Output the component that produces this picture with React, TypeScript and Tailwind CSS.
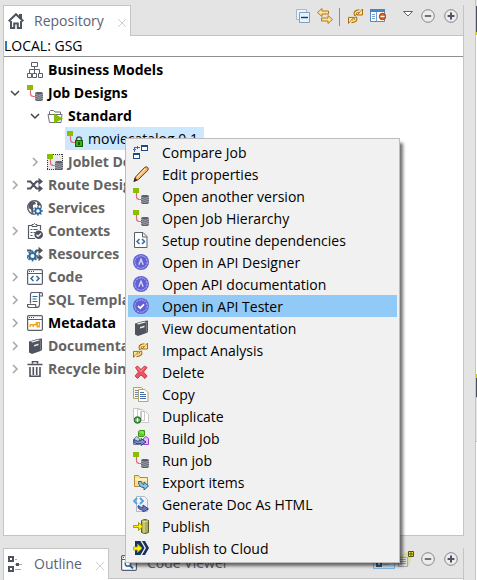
import type { ComponentType, ReactNode } from "react";
import clsx from "clsx";

type Icon = ComponentType;
type TreeItem = {
  name: string;
  icon: Icon;
  level?: number;
  arrow?: "open" | "closed";
  tone?: "dark" | "muted" | "selected";
};
type MenuItem = { name: string; icon: Icon; active?: boolean };

function Svg({ children, crisp }: { children: ReactNode; crisp?: boolean }) {
  return (
    <svg
      viewBox="0 0 16 16"
      className="h-4 w-4 shrink-0"
      fill="none"
      shapeRendering={crisp ? "crispEdges" : undefined}
      aria-hidden="true"
    >
      {children}
    </svg>
  );
}

const House = () => (
  <Svg>
    <path d="M11 1h3v5h-3z" fill="#4f535f" />
    <path d="M0.7 8.3 8 1.2l7.3 7.1" stroke="#4f535f" strokeWidth="2" />
    <path d="M3 8v7h3.2v-4.5h3.6V15H13V8" stroke="#4f535f" strokeWidth="2" />
  </Svg>
);

const OrgChart = () => (
  <Svg>
    <path
      d="M4.500.5h6v4h-6zM7.500 4.500v7M2.500 11.500V7.500h10v4M.5 11.500h4v4h-4zM5.500 11.500h4v4h-4zM11.500 11.500h4v4h-4z"
      stroke="#5b5f6b"
    />
  </Svg>
);

function JobParts() {
  return (
    <>
      <path d="M0 0h6v5H0z" fill="#8abf00" />
      <path d="M3.500 5v3.500q0 3 3 3H9" stroke="#dc6b78" strokeWidth="1.200" />
      <rect x="8" y="7" width="8" height="9" rx="2" fill="#5c606a" />
      <path d="M8 9.500q4 1.500 8 0M8 11.500q4 1.500 8 0M8 13.500q4 1.500 8 0" stroke="#b9bbc0" strokeWidth=".8" />
    </>
  );
}

const Job = () => (
  <Svg>
    <JobParts />
  </Svg>
);

const Joblet = () => (
  <Svg>
    <path d="M0 0h16v16H0z" fill="#e9e9e9" />
    <path d="M0 .5h16M0 15.500h16M.5 0v16M15.500 0v16" stroke="#333" strokeDasharray="1 1" />
    <JobParts />
  </Svg>
);

const LockedJob = () => (
  <Svg>
    <path d="M0 0h6v5H0z" fill="#8abf00" />
    <path d="M3.500 5v3.500q0 3 3 3H9" stroke="#dc6b78" strokeWidth="1.200" />
    <path d="M9.500 10V8.500a2.500 2.500 0 0 1 5 0V10" stroke="#555" strokeWidth="1.500" />
    <rect x="8.500" y="9.500" width="7" height="6" fill="#34b414" stroke="#17600a" />
    <path d="M12 11v3" stroke="#0b4205" strokeWidth="1.500" />
  </Svg>
);

const FolderRun = () => (
  <Svg>
    <path d="M2.500 14.500 1 6.500H15l-1 8zM2.500 6V3.500l1-1h3l1.500 1.500h5.500V6" stroke="#6b6f79" />
    <path d="M7 5.500 16 10.500 7 15.500z" fill="#84bd00" />
  </Svg>
);

function ShuffleParts() {
  return (
    <>
      <path d="M0 4.500h3.500l6 7H13M0 11.500h3.500l6-7H13" stroke="#4f535f" strokeWidth="2" />
      <path d="M11.500.8 16 4.500l-4.500 3.700zM11.500 7.800 16 11.500l-4.500 3.700z" fill="#4f535f" />
    </>
  );
}

function GearParts() {
  return (
    <>
      <circle r="3" stroke="#2d6a9f" strokeWidth="2" />
      <path
        d="M0-5.500V-3M0 3V5.500M-5.500 0H-3M3 0H5.500M-3.900-3.900-2.200-2.200M2.200 2.200 3.900 3.900M3.900-3.900 2.200-2.200M-2.200 2.200-3.900 3.900"
        stroke="#2d6a9f"
        strokeWidth="1.600"
      />
    </>
  );
}

const Shuffle = () => (
  <Svg>
    <ShuffleParts />
  </Svg>
);

const Services = () => (
  <Svg>
    <circle cx="7.500" cy="7.500" r="6.800" fill="#fff" stroke="#555966" strokeWidth="1.400" />
    <path d="M2 3.500 4.500 1.500 8 2l1 2-3 1v2.500l2 2L7 14 4.500 12.500 4 9.500 1.500 8zM10.500 1.500l3 3-2 2-1.500-2z" fill="#555966" />
    <circle cx="11" cy="11" r="5" fill="#fff" />
    <g transform="translate(11 11) scale(.88)">
      <GearParts />
    </g>
  </Svg>
);

const Contexts = () => (
  <Svg>
    <path d="M8 15.500H1.500v-13H5M10 2.500h3.500V7" stroke="#555966" strokeWidth="1.200" />
    <path d="M5 3.500v-2h1.500L7.500.5l1 1H10v2z" stroke="#555966" />
    <path d="M3.500 6.500h2M6.500 6.500h4M3.500 9.500h2M6.500 9.500h2M3.500 12.500h2" stroke="#555966" />
    <circle cx="11.700" cy="11.700" r="4.300" fill="#4f535f" />
    <path d="m9.500 11.800 1.600 1.600 2.900-3" stroke="#fff" strokeWidth="1.300" />
  </Svg>
);

const Resources = () => (
  <Svg>
    <ShuffleParts />
    <circle cx="5.500" cy="10" r="4.500" fill="#fff" />
    <g transform="translate(5.500 10)">
      <GearParts />
    </g>
  </Svg>
);

function WindowParts() {
  return (
    <>
      <rect x=".6" y=".6" width="14.800" height="14.800" rx="1.200" fill="#fff" stroke="#5b5f6b" strokeWidth="1.200" />
      <path d="M1 4.500h14" stroke="#5b5f6b" />
      <path d="M2 2.500h1M4 2.500h1M6 2.500h1" stroke="#4f535f" />
    </>
  );
}

const Code = () => (
  <Svg>
    <WindowParts />
    <path d="M6.500 7 4 9.500 6.500 12M9.500 7l2.500 2.500L9.500 12" stroke="#2d6a9f" strokeWidth="1.500" />
  </Svg>
);

const Metadata = () => (
  <Svg>
    <WindowParts />
    <path d="M8.500 7H13v5.500H9.500v-2H7v1.500H5.500v-1.500H4v1.500H2.500V9h6z" fill="#f6a81c" />
    <path d="M11 8.500h1v2h-1z" fill="#fff1d4" />
  </Svg>
);

const SqlScroll = () => (
  <Svg>
    <path
      d="M3.500 11.500v-9q0-2 2-2h8q2 0 2 2v1.500h-3M12.500 4V2.500q0-2 1.500-2M12.500 4v8.500q0 3-2.500 3H2.500q-2 0-2-2v-1h8v1q0 2 2 2"
      stroke="#5b5f6b"
      strokeWidth="1.200"
    />
    <path d="M5.500 4.500h5M5.500 7h4M5.500 9.500h5" stroke="#2d6a9f" strokeWidth="1.200" />
  </Svg>
);

const Book = () => (
  <Svg>
    <path d="M2 3.500 10.500 1 15 .5V12l-1.500 1-8.500 3-3-1.500z" fill="#4f535f" />
    <path d="M3.500 3.700 11.500 1.500l1.500.7-7.500 2.200z" fill="#f4f4f4" />
    <path d="m7 7 4.500-1.400v1.600L7 8.600z" fill="#e8e8e8" />
    <path d="M13.500 2v10" stroke="#8b8e96" strokeWidth=".7" />
  </Svg>
);

const Trash = () => (
  <Svg>
    <path d="M5.500 2.500v-2h5v2M.5 3.500h15M3 6v9.200h10V6M6.300 6v8M9.700 6v8" stroke="#4f535f" strokeWidth="1.600" />
  </Svg>
);

const Compare = () => (
  <Svg crisp>
    <path d="M8.500 1.500h6v5h-6zM.5 9.500h6v5h-6z" fill="#fff" stroke="#1f4b85" />
    <path d="M8 1h7v2H8zM0 9h7v2H0z" fill="#1f4b85" />
    <path d="M1.500 7.500v-4h4M0 5.500h3M4.500 2v3M6.500 3.500h-1" stroke="#3f6ea5" />
  </Svg>
);

const Pencil = () => (
  <Svg>
    <path d="M1 15.500 2.500 11 11.500 1.500q2-1.500 3.200 0t0 3L5.500 13.500z" fill="#efb36b" stroke="#6d3c1c" />
    <path d="M4 11.500 12.500 2.800" stroke="#ffe0a8" strokeWidth="1.300" />
    <path d="m.5 15.800 1.300-4 2.700 2.400z" fill="#3b2517" />
  </Svg>
);

const DocCode = () => (
  <Svg>
    <path d="M1.500.5h8.500l4 4v11H1.500zM9.500.5V5H14" fill="#fff" stroke="#5b5f6b" />
    <path d="M6.500 7 4 9.500 6.500 12M9 7l2.500 2.500L9 12" stroke="#2d6a9f" strokeWidth="1.500" />
  </Svg>
);

function BadgeParts() {
  return (
    <>
      <circle cx="8" cy="8" r="8" fill="#6260d2" />
      <circle cx="8" cy="8" r="6.200" stroke="#b9b8f2" strokeWidth="1" strokeDasharray="2.200 .7" />
    </>
  );
}

const ApiDesigner = () => (
  <Svg>
    <BadgeParts />
    <path d="M5.800 10.800 8 5.300l2.200 5.500" stroke="#dddcff" strokeWidth="1.300" />
  </Svg>
);

const ApiTester = () => (
  <Svg>
    <BadgeParts />
    <path d="m5 8 2.200 2.200L11 6.400" stroke="#fff" strokeWidth="1.700" />
  </Svg>
);

function SyncArrow() {
  return (
    <>
      <path d="M7.800 7.500Q5.500 3 11.500 2.800" stroke="#a86e10" strokeWidth="3.200" />
      <path d="M14.500 1v6H9.200z" fill="#fde694" stroke="#a86e10" strokeLinejoin="round" />
      <path d="M7.400 6.600Q6.300 3.200 12.500 3" stroke="#fde694" strokeWidth="1.400" />
    </>
  );
}

const Sync = () => (
  <Svg>
    <SyncArrow />
    <g transform="rotate(180 7.500 8.200)">
      <SyncArrow />
    </g>
  </Svg>
);

const Delete = () => (
  <Svg>
    <path
      d="M2.500 3.500 4.500 2 8 5.500 11.500 2l2.500 1.500L10.500 8l3.500 4-2 2.500L8 11l-3.500 3.500L2 12l3.500-4z"
      fill="#ea5563"
      stroke="#cb3c48"
    />
    <path d="m4 3.500 4 4 3.500-4" stroke="#f69ba2" />
  </Svg>
);

const Copy = () => (
  <Svg>
    <path d="M.5 1.500h8l2 2v9H.5z" fill="#fff8dc" stroke="#b5a46a" />
    <path d="M2 4.500h4M2 6.500h3M2 8.500h3M2 10.500h3" stroke="#6f89b5" />
    <path d="M5.500 3.500h6.500l3 3v9H5.500z" fill="#fff" stroke="#b5a46a" />
    <path d="M7 6.500h4M7 8.500h6M7 10.500h6M7 12.500h6" stroke="#466daa" />
  </Svg>
);

const Duplicate = () => (
  <Svg>
    <path d="M.5.5h6l2 2v9h-8zM4.500 1.500h5l2 2v9h-7zM7.500 3.500h5l3 3v8h-8z" fill="#fff" stroke="#c8c8c8" />
    <circle cx="4.500" cy="12" r="3.300" fill="#4d9445" stroke="#267126" />
    <path d="M4.500 10v4M2.500 12h4" stroke="#fff" strokeWidth="1.200" />
  </Svg>
);

const Build = () => (
  <Svg>
    <path d="m.5 9.500 3-3 3 2v6h-6z" fill="#c9cfe4" stroke="#6d7898" />
    <path d="m10.500 8.500 2.500-2 2.500 2v6h-5z" fill="#d9c4f2" stroke="#a43be0" />
    <path d="m5.500 1.500 1-1h5v5l-1 1h-5z" fill="#59d31c" stroke="#3d9618" />
    <path d="M6.500 2h3.500v2" stroke="#a8f27c" />
    <path d="M1 9.500q4 3 7 1V8.500l5 3.500-5 3.500v-2q-4 1-7-1z" fill="#7f92c8" stroke="#27437d" />
  </Svg>
);

const Export = () => (
  <Svg>
    <path d="M1.500 12.500v-11h4l1.500 2h7.500v9z" fill="#fbdf91" stroke="#b98b38" />
    <path d="M2 5.500h12" stroke="#fff2bf" strokeWidth="2" />
    <path d="M5.500 7.500h3q0 3 2.500 3V8l4.500 4-4.500 4v-2.500q-5.500 0-5.500-6z" fill="#8fc4e3" stroke="#28648f" />
  </Svg>
);

const GenerateDoc = () => (
  <Svg>
    <path d="M3.500.5h8l3 3v12h-11z" fill="#f3f4fb" stroke="#b3b7c6" />
    <path d="M4 2 1 5l3 3M7 2l3 3-3 3" stroke="#4aa4dd" strokeWidth="1.800" />
    <path d="M6 9.500q0 2 4 2V9l5.500 4-5.500 3v-2q-5 0-5-4z" fill="#6778bb" stroke="#344583" />
  </Svg>
);

const Publish = () => (
  <Svg>
    <path d="M8.500 2.500q3.500-2 7 0v12q-3.500 2-7 0z" fill="#aab05a" stroke="#555c22" />
    <path d="M9 3q3 1 6 0M11 4v11" stroke="#e4e7a9" />
    <path d="M.5 7.500h5V4.500L10 8.500l-4.500 4v-3h-5z" fill="#fff200" stroke="#a79b15" />
  </Svg>
);

const PublishCloud = () => (
  <Svg>
    <path d="M2 1h5.500l4 7-4 7H2z" fill="#17325e" />
    <path d="M9 1h3l4 7-4 7H9l4-7z" fill="#17325e" />
    <path d="M.5 7h4V4L9 8.300l-4.500 4.200V10h-4z" fill="#fff200" stroke="#b0a524" strokeWidth=".8" />
  </Svg>
);

const CollapseAll = () => (
  <Svg>
    <path d="M1.500 1.500h10v10h-10z" fill="#edf5fb" stroke="#a1bad0" />
    <path d="M4.500 4.500h10v10h-10z" fill="#e5f3fc" stroke="#7f9fbf" />
    <path d="M6 9.500h7" stroke="#153b66" strokeWidth="1.400" />
  </Svg>
);

const LinkArrows = () => (
  <Svg>
    <path
      d="M.5 4.500 5 .5V3h6.500v3H5v2.500zM15.500 11.500l-4.500 4V13H4.500v-3H11V7.500z"
      fill="#fbe2a0"
      stroke="#b67a17"
      strokeLinejoin="round"
    />
  </Svg>
);

const TableIcon = () => (
  <Svg>
    <path d="M.5 1.500h14v12H.5z" fill="#fff" stroke="#5b87bc" />
    <path d="M0 1h15v3H0z" fill="#4783c8" />
    <path d="M6.500 4v9.500" stroke="#7ca0c9" />
    <path d="M2 6.500h3M2 8.500h3M2 10.500h3" stroke="#749fcf" />
    <circle cx="12.500" cy="8.500" r="3.200" fill="#e3641d" stroke="#ae3900" />
    <path d="M10.500 8.500h4" stroke="#fff" strokeWidth="1.300" />
  </Svg>
);

const ViewMenu = () => (
  <Svg>
    <path d="M3.500 3.500h9L8 8z" fill="#fff" stroke="#666" />
  </Svg>
);

const Minimize = () => (
  <Svg>
    <circle cx="8" cy="8" r="6.300" fill="#ececec" stroke="#85858d" />
    <path d="M4.800 8h6.400" stroke="#4f535f" strokeWidth="1.600" />
  </Svg>
);

const Maximize = () => (
  <Svg>
    <circle cx="8" cy="8" r="6.300" fill="#ececec" stroke="#85858d" />
    <path d="M4.600 8h6.800M8 4.600v6.800" stroke="#4f535f" strokeWidth="2" />
  </Svg>
);

const OutlineIcon = () => (
  <Svg>
    <path d="M1 1h4v4H1zM1 11h4v4H1z" stroke="#4f535f" strokeWidth="2" />
    <path d="M7 3.500h2M7 8.500h7M7 13.500h6" stroke="#a2a5ac" />
    <path d="M8 7h3v3H8z" fill="#4f535f" />
  </Svg>
);

const CodeViewer = () => (
  <Svg>
    <WindowParts />
    <circle cx="7" cy="8.500" r="2.800" stroke="#2d6a9f" strokeWidth="1.400" />
    <path d="m9 10.500 3 3" stroke="#2d6a9f" strokeWidth="1.800" />
  </Svg>
);

const Sheets = () => (
  <Svg>
    <path d="M1 6 9 1h6l-4 14H8z" fill="#d8dca8" />
    <path d="M.5 6.500h9v9h-9z" fill="#ddd" stroke="#aaa" />
    <path d="M2 8.500h6M2 10.500h6M2 12.500h6" stroke="#999" />
    <path d="M10.500.500h5v5h-5zM13 .5v5M10.500 3h5" fill="#f8ec27" stroke="#55520f" />
  </Svg>
);

const tree: TreeItem[] = [
  { name: "Business Models", icon: OrgChart, tone: "dark" },
  { name: "Job Designs", icon: Job, arrow: "open", tone: "dark" },
  { name: "Standard", icon: FolderRun, level: 1, arrow: "open", tone: "dark" },
  { name: "moviecatalog 0.1", icon: LockedJob, level: 2, tone: "selected" },
  { name: "Joblet Designs", icon: Joblet, level: 1, arrow: "closed" },
  { name: "Route Designs", icon: Shuffle, arrow: "closed" },
  { name: "Services", icon: Services },
  { name: "Contexts", icon: Contexts, arrow: "closed" },
  { name: "Resources", icon: Resources },
  { name: "Code", icon: Code, arrow: "closed" },
  { name: "SQL Templates", icon: SqlScroll, arrow: "closed" },
  { name: "Metadata", icon: Metadata, arrow: "closed", tone: "dark" },
  { name: "Documentation", icon: Book, arrow: "closed" },
  { name: "Recycle bin", icon: Trash, arrow: "closed" },
];

const menu: MenuItem[] = [
  { name: "Compare Job", icon: Compare },
  { name: "Edit properties", icon: Pencil },
  { name: "Open another version", icon: Job },
  { name: "Open Job Hierarchy", icon: Job },
  { name: "Setup routine dependencies", icon: DocCode },
  { name: "Open in API Designer", icon: ApiDesigner },
  { name: "Open API documentation", icon: ApiDesigner },
  { name: "Open in API Tester", icon: ApiTester, active: true },
  { name: "View documentation", icon: Book },
  { name: "Impact Analysis", icon: Sync },
  { name: "Delete", icon: Delete },
  { name: "Copy", icon: Copy },
  { name: "Duplicate", icon: Duplicate },
  { name: "Build Job", icon: Build },
  { name: "Run job", icon: Job },
  { name: "Export items", icon: Export },
  { name: "Generate Doc As HTML", icon: GenerateDoc },
  { name: "Publish", icon: Publish },
  { name: "Publish to Cloud", icon: PublishCloud },
];

function ToolButton({ label, icon: Icon, className }: { label: string; icon: Icon; className?: string }) {
  return (
    <button type="button" aria-label={label} className={clsx("flex items-center", className)}>
      <Icon />
    </button>
  );
}

function Tab({ name, icon: Icon, active }: { name: string; icon: Icon; active?: boolean }) {
  return (
    <button
      type="button"
      role="tab"
      aria-selected={!!active}
      className={clsx(
        "flex items-center text-[14px] leading-5 text-[#5d6273]",
        active ? "-mb-px border-t border-r border-[#c4c4c4] bg-white pr-1 pl-1" : "pl-3",
      )}
    >
      <Icon />
      <span className="ml-2.5">{name}</span>
      {active && (
        <svg viewBox="0 0 8 8" className="mt-1 ml-3.5 h-2 w-2" aria-hidden="true">
          <path d="m0 0 8 8M8 0 0 8" stroke="#d0d0d0" />
        </svg>
      )}
    </button>
  );
}

function Arrow({ state }: { state: "open" | "closed" }) {
  return (
    <svg viewBox="0 0 10 10" className="h-2.5 w-2.5" fill="none" aria-hidden="true">
      {state === "open" ? (
        <path d="m1 3 4 4 4-4" stroke="#444" strokeWidth="1.500" />
      ) : (
        <path d="m3 1 4 4-4 4" stroke="#a6a6a6" strokeWidth="1.500" />
      )}
    </svg>
  );
}

function TreeRow({ item }: { item: TreeItem }) {
  const { name, icon: Icon, level = 0, arrow, tone = "muted" } = item;

  return (
    <li
      role="treeitem"
      aria-level={level + 1}
      aria-selected={tone === "selected"}
      className={clsx("flex h-[23px] items-center", level === 0 && "pl-1.5", level === 1 && "pl-[26px]", level === 2 && "pl-[46px]")}
    >
      <span className="flex w-[15px]">{arrow && <Arrow state={arrow} />}</span>
      <button
        type="button"
        className={clsx(
          "flex h-full items-center gap-[5px] pr-1.5 pl-0.5 text-[14px] whitespace-nowrap",
          tone === "dark" && "font-bold text-black",
          tone === "muted" && "font-bold text-[#646464]",
          tone === "selected" && "bg-[#cce8ff] text-black",
        )}
      >
        <Icon />
        {name}
      </button>
    </li>
  );
}

function ContextMenu() {
  return (
    <div
      role="menu"
      className="absolute top-[138px] left-[125px] w-[275px] border border-[#bdbdbd] bg-[#f1f1f1] p-0.5 pb-[3px] shadow-[4px_4px_3px_-1px_rgba(0,0,0,0.55)]"
    >
      {menu.map(({ name, icon: Icon, active }) => (
        <button
          key={name}
          type="button"
          role="menuitem"
          className={clsx(
            "flex h-[22px] w-full items-center gap-[13px] pl-[5px] text-left text-[14px] whitespace-nowrap text-black",
            active ? "bg-[#91c9f7]" : "hover:bg-[#e0e0e0]",
          )}
        >
          <Icon />
          {name}
        </button>
      ))}
    </div>
  );
}

export default function App() {
  return (
    <main className="relative flex h-screen overflow-hidden bg-[#e4e4e4] font-['Open_Sans','Noto_Sans',sans-serif]">
      <div className="flex min-w-0 flex-1 flex-col pt-[5px] pl-[3px]">
        <section className="flex min-h-0 flex-1 flex-col border-r border-b border-l border-[#c4c4c4]">
          <header className="flex h-[31px] shrink-0 border-b border-[#c4c4c4]">
            <div role="tablist" className="flex">
              <Tab name="Repository" icon={House} active />
            </div>
            <div className="ml-auto flex items-start pt-[3px] pr-1">
              <ToolButton label="Collapse all" icon={CollapseAll} className="mr-1.5" />
              <ToolButton label="Link with editor" icon={LinkArrows} />
              <span className="mx-1.5 h-[18px] w-px bg-[#8b8b8b]" />
              <ToolButton label="Refresh" icon={Sync} className="mr-1.5 ml-0.5" />
              <ToolButton label="Filters" icon={TableIcon} className="mr-3.5" />
              <ToolButton label="View menu" icon={ViewMenu} className="mr-1" />
              <ToolButton label="Minimize" icon={Minimize} className="mr-[7px]" />
              <ToolButton label="Maximize" icon={Maximize} />
            </div>
          </header>
          <div className="flex min-h-0 flex-1 flex-col bg-white">
            <p className="h-[21px] shrink-0 border-b border-[#8f8f8f] text-[14px] leading-5 text-black">LOCAL: GSG</p>
            <ul role="tree" className="min-h-0 flex-1 pt-px">
              {tree.map((item) => (
                <TreeRow key={item.name} item={item} />
              ))}
            </ul>
          </div>
        </section>

        <section className="mt-3 flex h-[32px] shrink-0 flex-col border-r border-l border-[#c4c4c4]">
          <header className="flex h-[31px] shrink-0 border-b border-[#c4c4c4]">
            <div role="tablist" className="flex">
              <Tab name="Outline" icon={OutlineIcon} active />
              <Tab name="Code Viewer" icon={CodeViewer} />
            </div>
            <div className="ml-auto flex items-start pt-[3px] pr-1">
              <span className="mr-1 bg-[#cce4f7] px-0.5 pb-px ring-1 ring-[#7eb6e6]">
                <ToolButton label="Outline view" icon={OutlineIcon} />
              </span>
              <ToolButton label="Preview" icon={Sheets} className="mr-1.5" />
              <ToolButton label="Minimize" icon={Minimize} className="mr-[7px]" />
              <ToolButton label="Maximize" icon={Maximize} />
            </div>
          </header>
          <div className="flex-1 bg-white" />
        </section>
      </div>

      {/* edge of the editor area */}
      <div className="ml-[11px] flex w-0.5 flex-col border-l border-[#c4c4c4] pt-1.5">
        <div className="h-[26px] bg-[#4b4f5c]" />
        <div className="h-[3px] bg-[#c3d600]" />
        <div className="h-[339px] bg-white" />
        <div className="h-1 bg-[#c3d600]" />
        <div className="h-[19px] bg-[#4b4f5c]" />
        <div className="h-[45px] border-t border-b border-[#c4c4c4]" />
        <div className="flex-1 bg-white" />
      </div>

      <ContextMenu />
    </main>
  );
}
